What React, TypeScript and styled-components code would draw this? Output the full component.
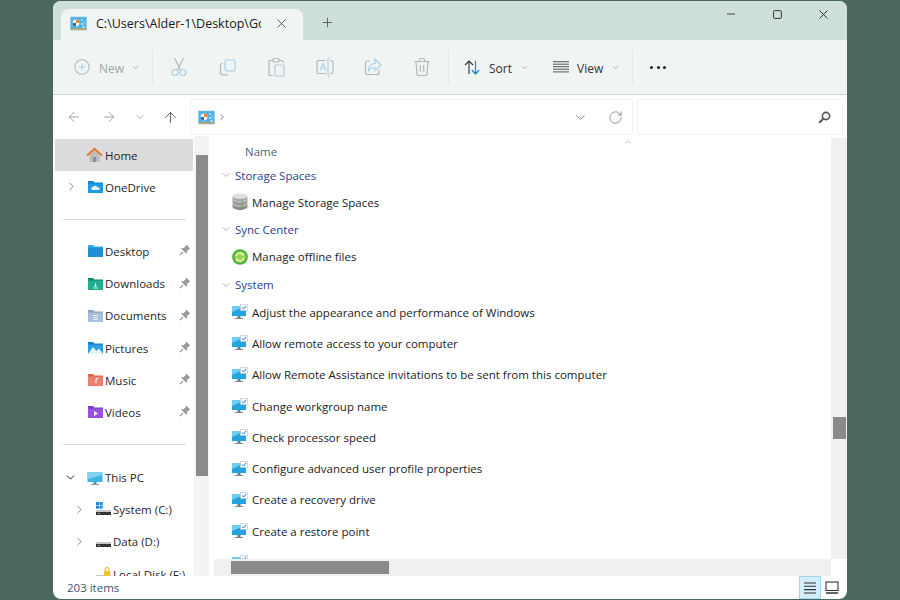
import React from "react";
import styled, { createGlobalStyle } from "styled-components";
import { ChevronDown, ChevronRight, ChevronUp, X, Plus, ArrowLeft, ArrowRight, ArrowUp, RotateCw } from "lucide-react";

const Global = createGlobalStyle`
  html, body { margin: 0; padding: 0; width: 900px; height: 600px; overflow: hidden; background: #4a685f; }
  body { font-family: "Open Sans", "Noto Sans", sans-serif; }
  svg { display: block; flex: none; }
`;

const Window = styled.div`
  width: 794px; height: 598px; margin: 1px 0 0 53px; background: #fff;
  border-radius: 8px; overflow: hidden; display: flex; flex-direction: column;
`;
const TitleBar = styled.div`
  height: 39px; flex: none; background: #cfdfda; display: flex; align-items: flex-end; padding-left: 8px;
`;
const Tab = styled.div`
  width: 242px; height: 31px; background: #f0f4f3; border-radius: 8px 8px 0 0; display: flex; align-items: center;
  padding: 0 0 2px 9px; box-sizing: border-box;
`;
const TabTitle = styled.div`
  width: 165px; margin-left: 9px; font-size: 12.5px; color: #1a1a1a; white-space: nowrap; overflow: hidden;
`;
const TabClose = styled.div`margin-left: 13px; color: #333; display: flex;`;
const NewTab = styled.div`margin: 0 0 8px 17px; color: #444; height: 20px; display: flex; align-items: center;`;
const WindowControls = styled.div`
  margin-left: auto; align-self: flex-start; display: flex; height: 26px; align-items: center; color: #333; padding-right: 1px;
`;
const WindowControl = styled.div`width: 46px; display: flex; justify-content: center;`;

const Toolbar = styled.div`
  height: 55px; flex: none; background: #f0f4f3; border-bottom: 1.5px solid #c9d8d3; box-sizing: border-box;
  display: flex; align-items: center; padding-left: 21px;
`;
const NewButton = styled.div`
  display: flex; align-items: center; width: 78px; color: #a2a5a5; font-size: 12px; gap: 9px;
`;
const ToolLabel = styled.span`padding-top: 2px;`;
const Caret = styled.span`margin-left: ${p => p.$gap ?? 0}px; display: flex; color: ${p => p.$color ?? "#999"};`;
const ToolSep = styled.div`width: 1px; height: 34px; background: #e3e9e7; flex: none;`;
const IconTool = styled.div`width: 48.5px; display: flex; justify-content: center; align-items: center;`;
const IconGroup = styled.div`display: flex; margin: 0 0 0 2px; width: 293px;`;
const TextTool = styled.div`
  display: flex; align-items: center; color: #333; font-size: 12px; gap: 8px; width: ${p => p.$w}px; margin-left: ${p => p.$ml ?? 0}px;
`;
const Dots = styled.div`display: flex; gap: 3.5px; margin-left: 17px;`;
const Dot = styled.i`width: 3px; height: 3px; border-radius: 50%; background: #222; display: block;`;

const AddressRow = styled.div`
  height: 41px; flex: none; background: #fff; display: flex; align-items: center; padding: 3px 0 0 13px; box-sizing: border-box;
`;
const NavButton = styled.div`
  width: ${p => p.$w}px; padding-left: ${p => p.$pl ?? 0}px; box-sizing: border-box; display: flex; justify-content: center; color: ${p => p.$color};
`;
const AddressBox = styled.div`
  width: 443px; height: 36px; box-sizing: border-box; border: 1px solid #f0f0f0; border-radius: 3px;
  display: flex; align-items: center; padding-left: 7px; gap: 2px; color: #444;
`;
const AddressEnd = styled.div`margin-left: auto; display: flex; align-items: center; color: #555;`;
const Refresh = styled.div`margin: 0 9px 0 20px; color: #606060;`;
const SearchBox = styled.div`
  width: 206px; height: 36px; margin-left: 4px; box-sizing: border-box; border: 1px solid #f0f0f0; border-radius: 3px;
  display: flex; align-items: center; justify-content: flex-end; padding-right: 11px;
`;

const Body = styled.div`flex: 1; min-height: 0; display: flex; background: #fff;`;
const Sidebar = styled.div`
  width: 140px; flex: none; height: 100%; overflow: hidden; padding: 3px 0 0 2px; box-sizing: border-box;
`;
const NavRow = styled.div`
  height: 32.2px; display: flex; align-items: center; position: relative; font-size: 11.5px; color: #1f1f1f;
  background: ${p => (p.$active ? "#dcdcdc" : "transparent")};
  padding-left: ${p => p.$indent}px; white-space: nowrap;
`;
const NavChevron = styled.span`
  position: absolute; left: ${p => p.$left}px; top: 9px; color: ${p => p.$color ?? "#666"};
`;
const NavLabel = styled.span`margin-left: 2px;`;
const Pin = styled.span`position: absolute; right: 2px; top: 9px;`;
const NavDivider = styled.div`
  height: 1px; margin: 15.5px 7px ${p => p.$bottom ?? 15.5}px 8px; background: #dcdcdc;
`;
const SideTrack = styled.div`
  width: 15px; flex: none; background: #f3f3f3; height: 100%; padding: 19px 0 0 2px; box-sizing: border-box; margin-left: 1px;
`;
const SideThumb = styled.div`width: 12px; height: 321px; background: #8a8a8a;`;

const Gutter = styled.div`width: 5px; flex: none;`;
const Main = styled.div`flex: 1; min-width: 0; display: flex; flex-direction: column; margin-top: 2px;`;
const MainTop = styled.div`flex: 1; min-height: 0; display: flex;`;
const FileList = styled.div`flex: 1; min-width: 0; overflow: hidden; position: relative; padding-left: 1px;`;
const SortCaret = styled.span`position: absolute; left: 409px; top: -1px; color: #888;`;
const ColumnHead = styled.div`
  height: 24.5px; margin-top: 1px; display: flex; align-items: center; padding-left: 30px; font-size: 11.5px; color: #4d5f7c;
`;
const GroupRow = styled.div`
  height: ${p => p.$h ?? 23}px; display: flex; align-items: center; font-size: 11.5px; color: #2a3f91; padding-left: 5px; gap: 3px;
`;
const ItemRow = styled.div`
  height: ${p => p.$h}px; display: flex; align-items: center; font-size: 11.5px; color: #222; padding-left: 17px; gap: 4px; white-space: nowrap;
`;
const VTrack = styled.div`
  width: 16px; flex: none; background: #f0f0f0; padding: 279px 0 0 2px; box-sizing: border-box;
`;
const VThumb = styled.div`width: 13px; height: 22px; background: #8a8a8a;`;
const HBar = styled.div`
  height: 17px; flex: none; background: #f0f0f0; margin-right: 16px; padding: 2px 0 0 17px; box-sizing: border-box;
`;
const HThumb = styled.div`width: 158px; height: 13px; background: #8a8a8a;`;

const StatusBar = styled.div`
  height: 23px; flex: none; display: flex; align-items: center; padding: 0 0 0 14px; font-size: 11.5px; color: #3f5270;
`;
const ViewButtons = styled.div`margin-left: auto; display: flex; align-items: center; padding-right: 4px; height: 100%;`;
const ViewButton = styled.div`
  width: 22px; height: 100%; box-sizing: border-box; display: flex; align-items: center; justify-content: center;
  background: ${p => (p.$on ? "#d5edf8" : "transparent")}; border: 1px solid ${p => (p.$on ? "#a0d6ee" : "transparent")};
`;

/* ---------- drawings ---------- */
const CpIcon = ({ s = 17 }: { s?: number }) => (
  <svg width={s} height={s} viewBox="0 0 17 17">
    <rect x="0.5" y="2" width="16" height="13" fill="#4fb3e8" stroke="#7fc6ea" strokeWidth="0.6" />
    <circle cx="6" cy="8" r="3.4" fill="#f5f9fc" />
    <path d="M6 8V4.6A3.4 3.4 0 0 1 9.4 8Z" fill="#e9892e" />
    <path d="M6 8H2.6A3.4 3.4 0 0 0 6 11.4Z" fill="#3463b8" />
    <path d="M11 5h2M14 7h1M11 9h3M12 12h3" stroke="#eaf6fd" strokeWidth="1" />
    <rect x="1" y="13.4" width="15" height="1.4" fill="#d9a24e" />
  </svg>
);
const FolderIcon = ({ c, d, glyph }: { c: string; d: string; glyph?: React.ReactNode }) => (
  <svg width="15" height="14" viewBox="0 0 15 14">
    <path d="M0 1h5l1.5 1.6H15V13H0Z" fill={d} />
    <rect x="0" y="3.6" width="15" height="9.4" fill={c} />
    {glyph}
  </svg>
);
const HomeIcon = () => (
  <svg width="17" height="16" viewBox="0 0 17 16">
    <path d="M3.5 7.5 8.5 3l5 4.5V15h-10Z" fill="#bdbdbd" />
    <rect x="7" y="10" width="3" height="5" fill="#8f8f8f" />
    <path d="M1 8.5 8.5 1.8 16 8.5" fill="none" stroke="#e8762a" strokeWidth="1.8" />
  </svg>
);
const PinIcon = () => (
  <svg width="12" height="12" viewBox="0 0 12 12">
    <path d="M7.4.8 11.2 4.6 9.9 5.2 8 7.2 7.6 10 2 4.4 4.8 4 6.8 2.1Z" fill="#9a9a9a" />
    <path d="M4 8 1 11" stroke="#9a9a9a" strokeWidth="1.2" />
  </svg>
);
const MonitorIcon = () => (
  <svg width="16" height="16" viewBox="0 0 16 16">
    <rect x="0.5" y="2" width="15" height="10" fill="#3fb6e2" />
    <path d="M0.5 2h15v3L.5 9Z" fill="#7ed2ef" />
    <rect x="6.5" y="12" width="3" height="2" fill="#5d8aa0" />
    <rect x="4" y="14" width="8" height="1" fill="#7f9aa8" />
  </svg>
);
const DriveIcon = ({ win, lock }: { win?: boolean; lock?: boolean }) => (
  <svg width="15" height="15" viewBox="0 0 15 15">
    {win && <g fill="#1d86d8"><rect x="0" y="0" width="3" height="3" /><rect x="3.6" y="0" width="3" height="3" /><rect x="0" y="3.6" width="3" height="3" /><rect x="3.6" y="3.6" width="3" height="3" /></g>}
    <rect x="0" y="8" width="15" height="2" fill="#c7c7c7" />
    <rect x="0" y="10" width="15" height="3" fill="#333" />
    <rect x="2" y="11" width="2" height="1" fill="#4bd06a" />
    {lock && <g><rect x="8" y="4" width="6" height="6" fill="#f4c430" /><path d="M9 4V2.5a2 2 0 0 1 4 0V4" fill="none" stroke="#f4c430" strokeWidth="1.2" /></g>}
  </svg>
);
const StorageIcon = () => (
  <svg width="16" height="18" viewBox="0 0 16 18">
    <path d="M.5 13.500V11h15v2.500c0 1.800-3.400 3.500-7.500 3.500S.5 15.300.5 13.500Z" fill="#8b8b8b" />
    <ellipse cx="8" cy="11" rx="7.500" ry="3" fill="#bdbdbd" />
    <path d="M.5 9V6.500h15V9c0 1.800-3.400 3.500-7.500 3.500S.5 10.800.5 9Z" fill="#9a9a9a" />
    <ellipse cx="8" cy="6.500" rx="7.500" ry="3" fill="#c9c9c9" />
    <path d="M.5 5V3.500h15V5c0 1.800-3.400 3.500-7.500 3.500S.5 6.800.5 5Z" fill="#a8a8a8" />
    <ellipse cx="8" cy="3.200" rx="7.500" ry="2.800" fill="#dedede" />
    <path d="M10 8.500v7.500" stroke="#76a04a" strokeWidth="1" />
  </svg>
);
const SyncIcon = () => (
  <svg width="16" height="16" viewBox="0 0 16 16">
    <circle cx="8" cy="8" r="7.8" fill="#46b13c" />
    <circle cx="8" cy="8" r="5.8" fill="#8fd455" />
    <path d="M4.2 7.2A4 4 0 0 1 11 5.2M11.8 8.8A4 4 0 0 1 5 10.8" fill="none" stroke="#f7f3a8" strokeWidth="1.5" />
    <path d="M11.8 3.4V6.6H8.8ZM4.2 12.6V9.4H7.2Z" fill="#f7f3a8" />
  </svg>
);
const SystemIcon = () => (
  <svg width="16" height="16" viewBox="0 0 16 16">
    <rect x="0" y="2" width="14" height="10" fill="#25a3dc" />
    <path d="M0 2h14L0 8Z" fill="#6fcdf0" />
    <rect x="5.5" y="12" width="3" height="2" fill="#5f7f90" />
    <rect x="3" y="14" width="8" height="1" fill="#6f8a99" />
    <rect x="8.5" y="0.5" width="7" height="6" fill="#fff" stroke="#b3c3cc" strokeWidth="0.6" />
    <path d="M10 3.4 11.5 5 14.2 1.8" fill="none" stroke="#2f6fb6" strokeWidth="1" />
  </svg>
);
const ToolSvg = styled.svg.attrs({ viewBox: "0 0 20 20", fill: "none" })`
  width: 20px; height: 20px;
`;
const Gray = "#b4b9b8"; const Blue = "#a9cfe6";
const CutIcon = () => (
  <ToolSvg>
    <path d="M5.5 1 11.5 13M14.5 1 8.5 13" stroke={Gray} strokeWidth="1.1" />
    <circle cx="6" cy="15.5" r="3" stroke={Blue} strokeWidth="1.2" />
    <circle cx="14" cy="15.5" r="3" stroke={Blue} strokeWidth="1.2" />
  </ToolSvg>
);
const CopyIcon = () => (
  <ToolSvg>
    <rect x="7" y="3" width="10" height="11" rx="2" stroke={Blue} strokeWidth="1.2" />
    <path d="M4.5 6.5h-.5a1.5 1.5 0 0 0-1.5 1.5v8A1.8 1.8 0 0 0 4.300 17.800H10" stroke={Gray} strokeWidth="1.2" />
  </ToolSvg>
);
const PasteIcon = () => (
  <ToolSvg>
    <path d="M7 3.500H4a1 1 0 0 0-1 1V17.500a1 1 0 0 0 1 1h3M13 3.500h3a1 1 0 0 1 1 1V6" stroke={Gray} strokeWidth="1.2" />
    <rect x="7" y="1.500" width="6" height="3.500" rx="1" stroke={Gray} strokeWidth="1.2" />
    <rect x="9" y="8" width="9" height="11" rx="1.500" stroke={Blue} strokeWidth="1.2" />
  </ToolSvg>
);
const RenameIcon = () => (
  <ToolSvg>
    <path d="M11 3.500H3.500a1.500 1.500 0 0 0-1.500 1.500v10a1.500 1.500 0 0 0 1.500 1.500H11M15 3.500h1.500A1.500 1.500 0 0 1 18 5v10a1.500 1.500 0 0 1-1.500 1.500H15" stroke={Gray} strokeWidth="1.2" />
    <path d="M13 1h2M13 19h2M13 1v18" stroke={Blue} strokeWidth="1.1" />
    <path d="M5 13.500 8 6.500l3 7M6 11h4" stroke={Blue} strokeWidth="1.1" />
  </ToolSvg>
);
const ShareIcon = () => (
  <ToolSvg>
    <path d="M7 4H4.500A2 2 0 0 0 2.500 6v9.500a2 2 0 0 0 2 2H14a2 2 0 0 0 2-2V13" stroke={Gray} strokeWidth="1.2" />
    <path d="M12 2.500 18 8l-6 5.500V10.500c-3 0-5 1-6.500 3.500 0-4 2.500-7 6.500-7.500Z" stroke={Blue} strokeWidth="1.2" />
  </ToolSvg>
);
const TrashIcon = () => (
  <ToolSvg>
    <path d="M2.500 4.500h15M7.500 4.500V3a1.500 1.500 0 0 1 1.500-1.500h2A1.500 1.500 0 0 1 12.500 3v1.500" stroke={Gray} strokeWidth="1.2" />
    <path d="M4 4.500 5 17a1.500 1.500 0 0 0 1.500 1.500h7A1.500 1.500 0 0 0 15 17l1-12.500M8.300 8v7M11.700 8v7" stroke={Gray} strokeWidth="1.2" />
  </ToolSvg>
);
const NewIcon = () => (
  <svg width="16" height="16" viewBox="0 0 16 16" fill="none">
    <circle cx="8" cy="8" r="7.200" stroke="#b5bbba" strokeWidth="1.1" />
    <path d="M8 4.500v7M4.500 8h7" stroke="#a9cfe6" strokeWidth="1.1" />
  </svg>
);
const SortIcon = () => (
  <svg width="17" height="17" viewBox="0 0 17 17" fill="none">
    <path d="M5 15V2M1 6l4-4 4 4" stroke="#333" strokeWidth="1.1" />
    <path d="M11.500 2v13M7.800 11l3.700 4 3.700-4" stroke="#1a86d0" strokeWidth="1.2" />
  </svg>
);
const ViewIcon = () => (
  <svg width="16" height="12" viewBox="0 0 16 12" fill="none">
    <path d="M0 .7h16M0 3.200h16M0 5.700h16M0 8.200h16M0 10.900h16" stroke="#555" strokeWidth="1" />
  </svg>
);
const SearchIcon = () => (
  <svg width="13" height="13" viewBox="0 0 13 13" fill="none">
    <circle cx="8" cy="5" r="3.600" stroke="#555" strokeWidth="1.600" />
    <path d="M5.300 7.700 1.200 11.800" stroke="#555" strokeWidth="2" />
  </svg>
);
const ListViewIcon = () => (
  <svg width="14" height="12" viewBox="0 0 14 12" fill="none">
    <path d="M1 1h12M1 4.300h12M1 7.600h12M1 11h12" stroke="#333" strokeWidth="1.100" />
  </svg>
);
const TileViewIcon = () => (
  <svg width="14" height="13" viewBox="0 0 14 13" fill="none">
    <rect x="1" y="1" width="12" height="8.500" stroke="#333" strokeWidth="1.100" />
    <path d="M1 12h12" stroke="#333" strokeWidth="1.300" />
  </svg>
);

const pinned: [string, React.ReactNode][] = [
  ["Desktop", <FolderIcon c="#1c8fd6" d="#3aa8e6" />],
  ["Downloads", <FolderIcon c="#1fae8f" d="#128a6e" glyph={<path d="M7.500 6v4M6 8.500l1.500 1.500L9 8.500M5 11h5" stroke="#e8fff8" strokeWidth="0.8" fill="none" />} />],
  ["Documents", <FolderIcon c="#a9c0da" d="#8ea3bb" glyph={<path d="M5 6.500h5M5 8.500h5M5 10.500h5" stroke="#f0f5fa" strokeWidth="0.9" />} />],
  ["Pictures", <FolderIcon c="#2a9fe4" d="#1b7fc6" glyph={<path d="M0 13 5 6l3.500 4 2.500-2.500L15 13Z" fill="#e6f5fd" />} />],
  ["Music", <FolderIcon c="#ea8070" d="#d96a3f" glyph={<path d="M8 6v4.200M8 6l2.500-.5" stroke="#fff" strokeWidth="1" fill="none" />} />],
  ["Videos", <FolderIcon c="#9a4fe0" d="#7e3cc2" glyph={<path d="M6 6v5l4-2.500Z" fill="#fff" />} />],
];
const systemItems = [
  "Adjust the appearance and performance of Windows",
  "Allow remote access to your computer",
  "Allow Remote Assistance invitations to be sent from this computer",
  "Change workgroup name",
  "Check processor speed",
  "Configure advanced user profile properties",
  "Create a recovery drive",
  "Create a restore point",
  "Edit environment variables for your account",
];

export default function App() {
  return (
    <Window>
      <Global />
      <TitleBar>
        <Tab>
          <CpIcon />
          <TabTitle>C:\Users\Alder-1\Desktop\GodMode</TabTitle>
          <TabClose><X size={15} strokeWidth={1.2} /></TabClose>
        </Tab>
        <NewTab><Plus size={15} strokeWidth={1.2} /></NewTab>
        <WindowControls>
          <WindowControl><svg width="8" height="2" viewBox="0 0 8 2"><path d="M0 1h8" stroke="#444" strokeWidth="1" /></svg></WindowControl>
          <WindowControl><svg width="9" height="9" viewBox="0 0 9 9" fill="none"><rect x=".6" y=".6" width="7.800" height="7.800" rx="1" stroke="#333" strokeWidth="1" /></svg></WindowControl>
          <WindowControl><svg width="9" height="9" viewBox="0 0 9 9"><path d="M.5.5l8 8M8.500.5l-8 8" stroke="#333" strokeWidth="1" /></svg></WindowControl>
        </WindowControls>
      </TitleBar>
      <Toolbar>
        <NewButton>
          <NewIcon />
          <ToolLabel>New</ToolLabel>
          <Caret $gap={-2}><ChevronDown size={9} /></Caret>
        </NewButton>
        <ToolSep />
        <IconGroup>
          <IconTool><CutIcon /></IconTool>
          <IconTool><CopyIcon /></IconTool>
          <IconTool><PasteIcon /></IconTool>
          <IconTool><RenameIcon /></IconTool>
          <IconTool><ShareIcon /></IconTool>
          <IconTool><TrashIcon /></IconTool>
        </IconGroup>
        <ToolSep />
        <TextTool $w={89} $ml={15}>
          <SortIcon />
          <ToolLabel>Sort</ToolLabel>
          <Caret><ChevronDown size={9} /></Caret>
        </TextTool>
        <TextTool $w={79}>
          <ViewIcon />
          <ToolLabel>View</ToolLabel>
          <Caret><ChevronDown size={9} /></Caret>
        </TextTool>
        <ToolSep />
        <Dots><Dot /><Dot /><Dot /></Dots>
      </Toolbar>
      <AddressRow>
        <NavButton $w={16} $color="#8e8e8e"><ArrowLeft size={16} strokeWidth={1.2} /></NavButton>
        <NavButton $w={54} $color="#8e8e8e"><ArrowRight size={16} strokeWidth={1.2} /></NavButton>
        <NavButton $w={8} $color="#777"><ChevronDown size={12} strokeWidth={1.2} /></NavButton>
        <NavButton $w={46} $pl={6} $color="#555"><ArrowUp size={17} strokeWidth={1.3} /></NavButton>
        <AddressBox>
          <CpIcon />
          <ChevronRight size={10} strokeWidth={1.6} />
          <AddressEnd>
            <ChevronDown size={15} strokeWidth={1.2} />
            <Refresh><RotateCw size={15} strokeWidth={1} /></Refresh>
          </AddressEnd>
        </AddressBox>
        <SearchBox><SearchIcon /></SearchBox>
      </AddressRow>
      <Body>
        <Sidebar>
          <NavRow $active $indent={31}><HomeIcon /><NavLabel>Home</NavLabel></NavRow>
          <NavRow $indent={33}>
            <NavChevron $left={10}><ChevronRight size={13} strokeWidth={1.4} /></NavChevron>
            <FolderIcon c="#1c9be0" d="#1483c8" glyph={<path d="M4.500 10a1.500 1.500 0 0 1 .5-3 2.500 2.500 0 0 1 4.500 0.400A1.400 1.400 0 0 1 11 10Z" fill="#e8f6fd" />} />
            <NavLabel>OneDrive</NavLabel>
          </NavRow>
          <NavDivider />
          {pinned.map(([label, icon]) => (
            <NavRow key={label} $indent={33}>
              {icon}
              <NavLabel>{label}</NavLabel>
              <Pin><PinIcon /></Pin>
            </NavRow>
          ))}
          <NavDivider $bottom={16.5} />
          <NavRow $indent={32}>
            <NavChevron $left={9} $color="#222"><ChevronDown size={13} strokeWidth={1.8} /></NavChevron>
            <MonitorIcon />
            <NavLabel>This PC</NavLabel>
          </NavRow>
          <NavRow $indent={41}>
            <NavChevron $left={18}><ChevronRight size={13} strokeWidth={1.4} /></NavChevron>
            <DriveIcon win />
            <NavLabel>System (C:)</NavLabel>
          </NavRow>
          <NavRow $indent={41}>
            <NavChevron $left={18}><ChevronRight size={13} strokeWidth={1.4} /></NavChevron>
            <DriveIcon />
            <NavLabel>Data (D:)</NavLabel>
          </NavRow>
          <NavRow $indent={41}>
            <DriveIcon lock />
            <NavLabel>Local Disk (F:)</NavLabel>
          </NavRow>
        </Sidebar>
        <SideTrack><SideThumb /></SideTrack>
        <Gutter />
        <Main>
          <MainTop>
            <FileList>
              <SortCaret><ChevronUp size={10} strokeWidth={1.2} /></SortCaret>
              <ColumnHead>Name</ColumnHead>
              <GroupRow><ChevronDown size={12} strokeWidth={1} color="#666" />Storage Spaces</GroupRow>
              <ItemRow $h={31}><StorageIcon />Manage Storage Spaces</ItemRow>
              <GroupRow><ChevronDown size={12} strokeWidth={1} color="#666" />Sync Center</GroupRow>
              <ItemRow $h={32}><SyncIcon />Manage offline files</ItemRow>
              <GroupRow $h={24}><ChevronDown size={12} strokeWidth={1} color="#666" />System</GroupRow>
              {systemItems.map(t => (
                <ItemRow key={t} $h={31.300}><SystemIcon />{t}</ItemRow>
              ))}
            </FileList>
            <VTrack><VThumb /></VTrack>
          </MainTop>
          <HBar><HThumb /></HBar>
        </Main>
      </Body>
      <StatusBar>
        <span>203 items</span>
        <ViewButtons>
          <ViewButton $on><ListViewIcon /></ViewButton>
          <ViewButton><TileViewIcon /></ViewButton>
        </ViewButtons>
      </StatusBar>
    </Window>
  );
}
